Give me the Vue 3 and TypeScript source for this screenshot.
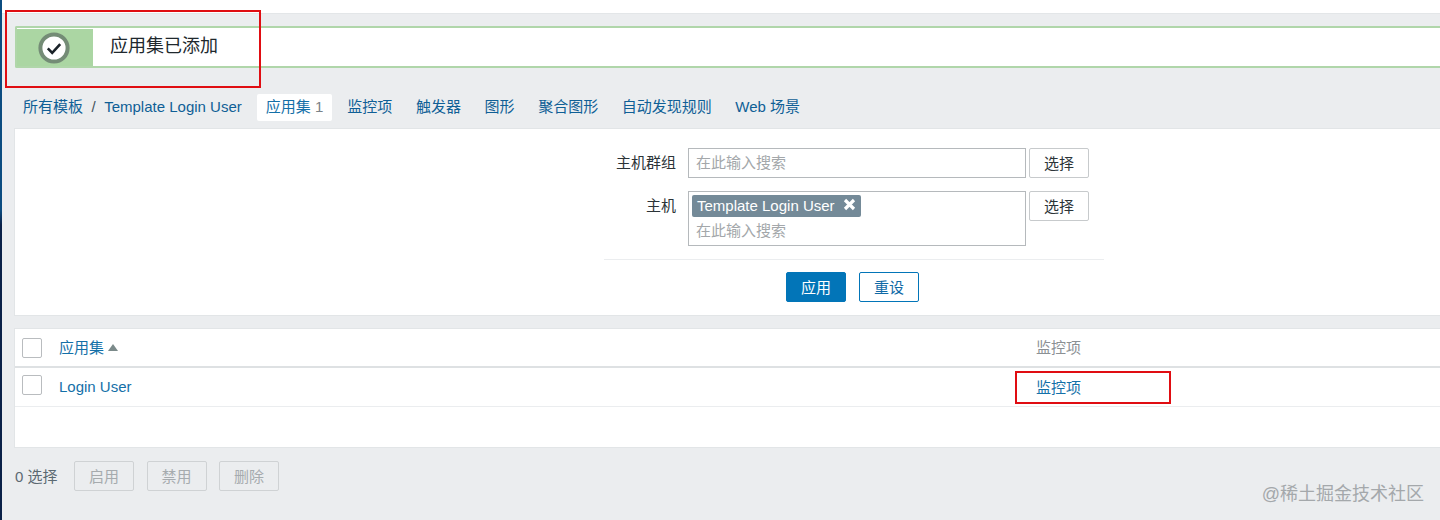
<script setup lang="ts">
const tabs: string[] = ['监控项', '触发器', '图形', '聚合图形', '自动发现规则', 'Web 场景']
const actions: string[] = ['启用', '禁用', '删除']
</script>

<template>
  <div class="page">
    <div class="rail"></div>
    <main class="main">
      <div class="topstrip"></div>
      <section class="msg">
        <div class="msg-icon">
          <svg width="32" height="32" viewBox="0 0 32 32">
            <circle cx="16" cy="16" r="13.6" fill="#fff" stroke="#748c76" stroke-width="4" />
            <path d="M9.8 16.4l4.4 4.4 8-8.6" fill="none" stroke="#1a2228" stroke-width="2.6" />
          </svg>
        </div>
        <div class="msg-text">应用集已添加</div>
      </section>
      <nav class="nav">
        <a class="crumb">所有模板</a>
        <span class="sep">/</span>
        <a class="crumb">Template Login User</a>
        <span class="tab active"><a>应用集</a> <span class="count">1</span></span>
        <a v-for="t in tabs" :key="t" class="tab">{{ t }}</a>
      </nav>
      <section class="filter">
        <div class="filter-form">
          <div class="row row-one">
            <label class="label">主机群组</label>
            <div class="field single"><span class="ph">在此输入搜索</span></div>
            <button class="btn-select">选择</button>
          </div>
          <div class="row">
            <label class="label">主机</label>
            <div class="field multi">
              <span class="chip">Template Login User
                <svg class="chip-x" width="13" height="13" viewBox="0 0 13 13">
                  <path d="M2 2l9 9M11 2l-9 9" stroke="#fff" stroke-width="3.2" />
                </svg>
              </span>
              <span class="ph ph-two">在此输入搜索</span>
            </div>
            <button class="btn-select">选择</button>
          </div>
        </div>
        <div class="filter-actions">
          <button class="btn-primary">应用</button>
          <button class="btn-outline">重设</button>
        </div>
      </section>
      <section class="table">
        <div class="thead">
          <span class="check"></span>
          <span class="col-name"><a>应用集</a><i class="sort"></i></span>
          <span class="col-items head-grey">监控项</span>
        </div>
        <div class="trow">
          <span class="check check-row"></span>
          <span class="col-name"><a>Login User</a></span>
          <span class="col-items"><a>监控项</a></span>
        </div>
      </section>
      <div class="actions">
        <span class="selected">0 选择</span>
        <button v-for="a in actions" :key="a" class="btn-disabled">{{ a }}</button>
      </div>
    </main>
    <div class="mark mark-a"></div>
    <div class="mark mark-b"></div>
    <div class="watermark">@稀土掘金技术社区</div>
  </div>
</template>

<style scoped>
.page {
  position: relative;
  display: flex;
  width: 1440px;
  height: 520px;
  overflow: hidden;
  background: #ebedef;
  color: #1f2c33;
  font: 15px "Liberation Sans", "Noto Sans CJK SC", sans-serif;
}
a { color: #1470a8; }
.rail { flex: 0 0 2px; background: linear-gradient(#0b4c80 0, #0b4c80 210px, #0a2148 225px, #0a2148 100%); }
.main { flex: 1; min-width: 0; display: flex; flex-direction: column; }
.topstrip { height: 13px; background: #fff; border-bottom: 1px solid #e3e6e8; margin-bottom: 12px; }
.msg {
  display: flex;
  align-items: stretch;
  height: 42px;
  margin-left: 13px;
  box-sizing: border-box;
  background: #fff;
  border: 2px solid #b0d6aa;
  border-right: 0;
  border-radius: 2px 0 0 2px;
}
.msg-icon {
  flex: 0 0 76px;
  display: flex;
  align-items: center;
  justify-content: center;
  background: #abd6a3;
  margin-top: 1px;
  padding-right: 2px;
  box-sizing: border-box;
}
.msg-text { padding-left: 17px; font-size: 18px; line-height: 37px; color: #20282d; }
.nav {
  display: flex;
  align-items: flex-start;
  height: 26px;
  margin: 26px 0 8px;
  padding-left: 21px;
  white-space: nowrap;
  line-height: 25px;
}
.crumb { color: #0f5f96; }
.sep { margin: 0 8.5px; color: #44535c; }
.tab { color: #0f5f96; margin-right: 23.6px; }
.tab.active {
  margin-left: 15px;
  margin-right: 15px;
  height: 27px;
  padding: 0 9px;
  background: #fff;
  border-radius: 2px;
  box-sizing: border-box;
}
.count { color: #7a8288; }
.filter {
  margin: 0 0 0 12px;
  height: 188px;
  box-sizing: border-box;
  background: #fff;
  border: 1px solid #e2e5e7;
  border-right: 0;
  padding-top: 19px;
}
.filter-form {
  width: 500px;
  margin-left: 589px;
  padding-bottom: 13px;
  border-bottom: 1px solid #ebedef;
}
.row { display: flex; align-items: flex-start; }
.row-one { margin-bottom: 13px; }
.label { width: 72px; text-align: right; line-height: 30px; color: #2c3438; }
.field {
  width: 338px;
  margin-left: 12px;
  box-sizing: border-box;
  background: #fff;
  border: 1px solid #b5b9bc;
}
.single { height: 30px; line-height: 28px; padding-left: 7px; }
.multi { height: 55px; padding: 3px 0 0 3px; display: flex; flex-direction: column; align-items: flex-start; }
.ph { color: #a3a7aa; }
.ph-two { margin: 1px 0 0 4px; line-height: 26px; }
.chip {
  display: inline-flex;
  align-items: center;
  height: 22px;
  padding: 0 5px 0 5px;
  gap: 8px;
  background: #748a98;
  color: #fff;
  border-radius: 2px;
  box-sizing: border-box;
  line-height: 20px;
}
.chip-x { margin-top: -3px; }
.btn-select {
  width: 60px;
  height: 30px;
  margin-left: 3px;
  padding: 0 0 2px;
  background: #fff;
  border: 1px solid #c7cacc;
  border-radius: 2px;
  color: #2c3438;
  font: inherit;
}
.filter-actions { display: flex; justify-content: center; gap: 13px; width: 500px; margin: 12px 0 0 589px; padding-right: 3px; box-sizing: border-box; }
.btn-primary, .btn-outline {
  width: 60px;
  height: 30px;
  padding: 0 0 2px;
  border-radius: 2px;
  font: inherit;
  box-sizing: border-box;
}
.btn-primary { background: #0275b8; border: 1px solid #0275b8; color: #fff; }
.btn-outline { background: #fff; border: 1px solid #0275b8; color: #0f6aa6; }
.table {
  margin: 12px 0 0 12px;
  height: 120px;
  box-sizing: border-box;
  background: #fff;
  border: 1px solid #e2e5e7;
  border-right: 0;
}
.thead, .trow { display: flex; align-items: center; }
.thead { height: 37px; border-bottom: 2px solid #dee1e3; }
.trow { height: 38px; border-bottom: 1px solid #ebedef; }
.check {
  flex: 0 0 20px;
  height: 20px;
  margin-left: 7px;
  background: #fff;
  border: 1px solid #b9bcbf;
  border-radius: 2px;
  box-sizing: border-box;
}
.check-row { margin-bottom: 4px; }
.col-name { flex: 0 0 977px; margin-left: 17px; display: flex; align-items: center; padding-bottom: 2px; }
.col-items { padding-bottom: 2px; }
.head-grey { color: #8b9094; }
.sort {
  width: 0;
  height: 0;
  margin-left: 4px;
  margin-top: 2px;
  border-left: 5px solid transparent;
  border-right: 5px solid transparent;
  border-bottom: 7px solid #7b8a8a;
}
.actions { display: flex; align-items: center; height: 30px; margin: 13px 0 0 13px; }
.selected { color: #5b6972; width: 59px; padding-bottom: 2px; }
.btn-disabled {
  width: 60px;
  height: 30px;
  margin-right: 12.5px;
  padding: 0 0 2px;
  background: #ebedef;
  border: 1px solid #cfd2d4;
  border-radius: 2px;
  color: #a6abae;
  font: inherit;
}
.mark { position: absolute; border: 2px solid #e00d12; box-sizing: border-box; pointer-events: none; }
.mark-a { left: 5px; top: 10px; width: 256px; height: 78px; }
.mark-b { left: 1015px; top: 371px; width: 156px; height: 33px; }
.watermark {
  position: absolute;
  right: 16px;
  top: 479px;
  font-size: 18px;
  color: #a4a8ab;
}
</style>
